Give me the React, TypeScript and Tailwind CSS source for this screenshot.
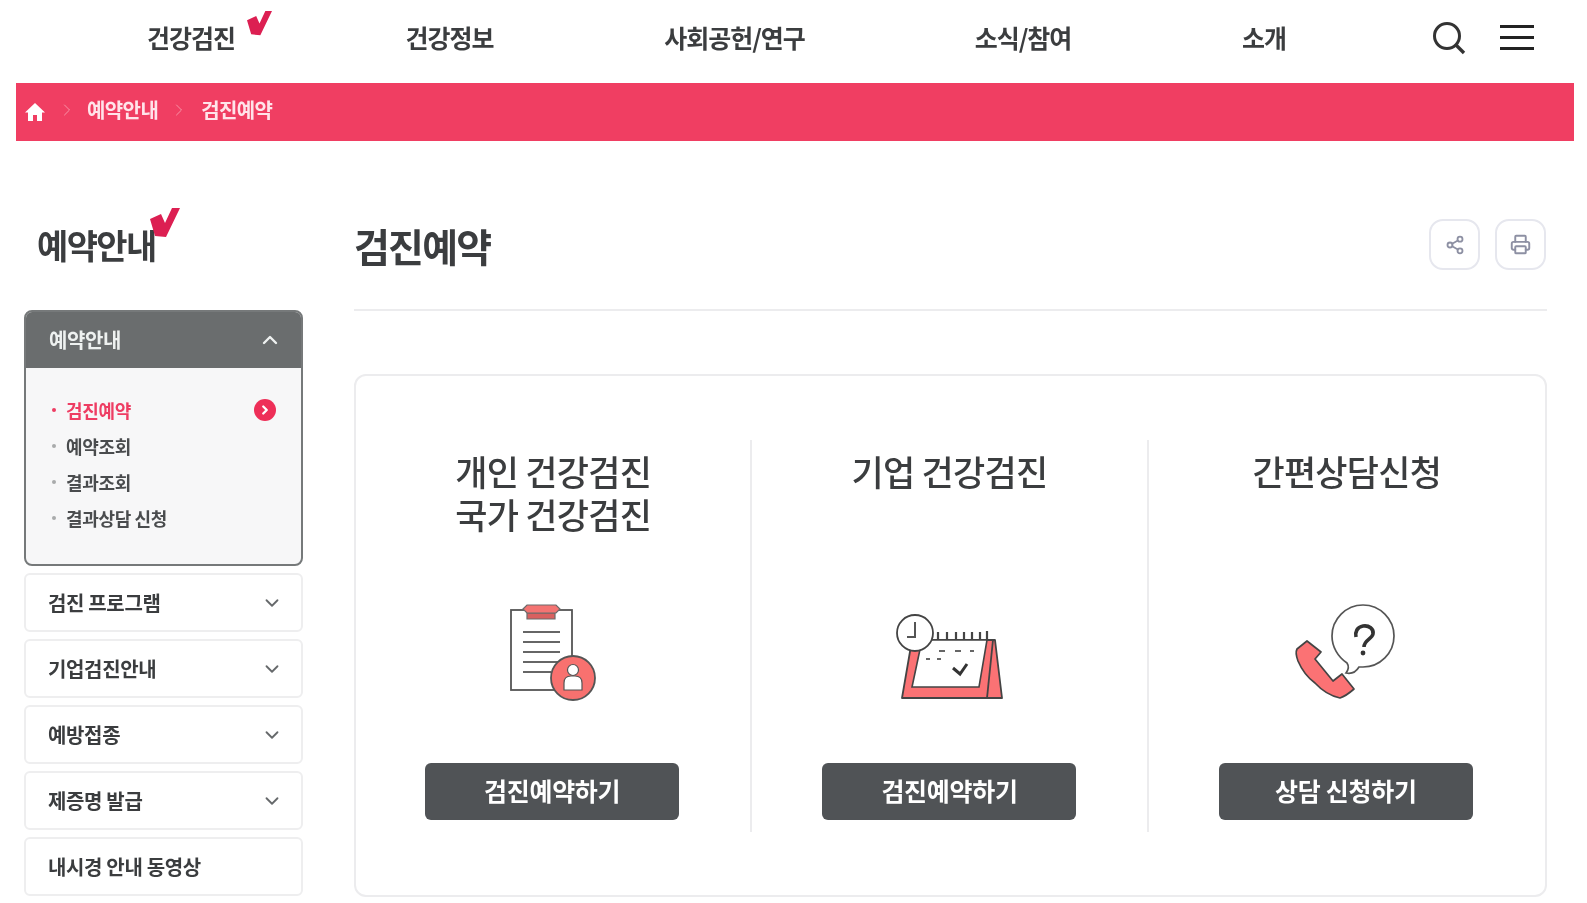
import { ChevronDown, ChevronRight, ChevronUp, Printer, Share2 } from "lucide-react";

const font = { fontFamily: '"Noto Sans CJK KR", "Noto Sans", sans-serif' };

const CheckMark = ({ className }: { className: string }) => (
  <svg viewBox="0 0 30 30" className={className}>
    <path d="M0 11 L11 6 L15 15 L22 0 L30 0 L16 29 L5 28 Z" fill="#dc1f52" />
  </svg>
);

const navItems = [
  { label: "건강검진", w: "w-[257px]", pad: "pr-[5px]" },
  { label: "건강정보", w: "w-[257px]", pad: "pr-[2px]" },
  { label: "사회공헌/연구", w: "w-[311px]", pad: "" },
  { label: "소식/참여", w: "w-[266px]", pad: "" },
  { label: "소개", w: "w-[216px]", pad: "" },
];

const subMenu = ["검진 프로그램", "기업검진안내", "예방접종", "제증명 발급", "내시경 안내 동영상"];

const ClipboardIcon = () => (
  <svg viewBox="0 0 160 140" className="w-[160px] h-[140px]">
    <rect x="30" y="30" width="61" height="80" fill="#fff" stroke="#555" strokeWidth="1.8" />
    <path d="M42 52H79M42 62H79M42 72H79M42 82H79M42 92H70" stroke="#666" strokeWidth="1.8" />
    <path d="M46 33H74V39H46Z" fill="#d9605f" stroke="#6b6b6b" strokeWidth="1.2" />
    <path d="M42 29L46 25H75L79 29L75 33H46Z" fill="#f47472" stroke="#6b6b6b" strokeWidth="1.2" />
    <circle cx="92" cy="98" r="22" fill="#f8716f" stroke="#555" strokeWidth="1.8" />
    <circle cx="92" cy="90" r="5.5" fill="#fff" stroke="#555" strokeWidth="1.2" />
    <path d="M83 110V103Q83 96 90 96H94Q101 96 101 103V110Z" fill="#fff" stroke="#555" strokeWidth="1.2" />
  </svg>
);

const CalendarIcon = () => (
  <svg viewBox="0 0 160 130" className="w-[160px] h-[130px]">
    <path d="M32 50H115L122 108H22Z" fill="#fb7274" stroke="#444" strokeWidth="1.8" strokeLinejoin="round" />
    <path d="M113 50L107 108" stroke="#444" strokeWidth="1.8" />
    <path d="M42 50H107L99 97H32Z" fill="#fff" stroke="#444" strokeWidth="1.6" />
    <path d="M58 42V50M67 42V50M76 42V50M84 42V50M92 42V50M100 42V50M107 41V50" stroke="#444" strokeWidth="2.2" />
    <path d="M59 61H65M75 61H81M90 61H94M46 69H50M57 69H61" stroke="#666" strokeWidth="2.2" />
    <path d="M73 78L80 84L87 74" fill="none" stroke="#333" strokeWidth="3" />
    <circle cx="35" cy="43" r="18" fill="#fff" stroke="#444" strokeWidth="1.8" />
    <path d="M35 32V47H27" fill="none" stroke="#555" strokeWidth="2" />
  </svg>
);

const PhoneIcon = () => (
  <svg viewBox="0 0 160 130" className="w-[160px] h-[130px]">
    <path
      d="M93 14C76 14 62 28 62 45C62 56 68 66 77 72C79 75 79 78 76 82C81 83 86 81 89 76C91 76 92 76 93 76C110 76 124 62 124 45C124 28 110 14 93 14Z"
      fill="#fff"
      stroke="#555"
      strokeWidth="1.7"
    />
    <path
      d="M86 46C85 41 87 36 93 35C99 34 104 38 103 43C102 48 94 49 94 56"
      fill="none"
      stroke="#333"
      strokeWidth="3.6"
    />
    <circle cx="93" cy="62" r="2.4" fill="#333" />
    <path
      d="M37 50L27 58Q25 62 28 70Q34 84 45 92Q56 104 70 107Q76 105 84 98L72 83L63 90L45 68L51 61Z"
      fill="#fb7274"
      stroke="#444"
      strokeWidth="1.7"
      strokeLinejoin="round"
    />
  </svg>
);

const columns = [
  { title: ["개인 건강검진", "국가 건강검진"], icon: <ClipboardIcon />, cta: "검진예약하기", border: true, iconBox: "ml-[16px]", btn: "mr-[2px]" },
  { title: ["기업 건강검진"], icon: <CalendarIcon />, cta: "검진예약하기", border: true, iconBox: "ml-[22px] pt-[10px]", btn: "" },
  { title: ["간편상담신청"], icon: <PhoneIcon />, cta: "상담 신청하기", border: false, iconBox: "ml-[6px] pt-[11px]", btn: "mr-[2px]" },
];

export default function App() {
  return (
    <div style={font} className="w-[1587px] h-[903px] overflow-hidden bg-white text-[#3b3d3f] [filter:blur(0.6px)]">
      {/* Top nav */}
      <header className="h-[83px] flex items-center pl-[65px]">
        {navItems.map((item, i) => (
          <div key={item.label} className={`${item.w} ${item.pad} flex justify-center relative`}>
            <span className="text-[25px] font-bold tracking-[-1px] pb-[7px]">{item.label}</span>
            {i === 0 && <CheckMark className="absolute left-[182px] top-[-8px] w-[25px] h-[25px]" />}
          </div>
        ))}
        <div className="ml-[60px] flex items-center gap-[33px] pb-[8px]">
          <svg viewBox="0 0 34 34" className="w-[34px] h-[34px]" fill="none" stroke="#333" strokeWidth="3">
            <circle cx="15" cy="15" r="12.5" />
            <path d="M24 24L32 32" strokeWidth="3.4" />
          </svg>
          <div className="w-[34px] ml-px flex flex-col gap-[8px]">
            <div className="h-[3px] bg-[#222]" />
            <div className="h-[3px] bg-[#222]" />
            <div className="h-[3px] bg-[#222]" />
          </div>
        </div>
      </header>

      {/* Breadcrumb */}
      <div className="ml-4 w-[1558px] h-[58px] bg-[#f03e62] flex items-center pl-[9px] pb-[4px] text-white text-[20px] font-bold tracking-[-0.6px]">
        <svg viewBox="0 0 20 20" className="w-[20px] h-[20px] mt-[4px]" fill="#fff">
          <path d="M10 1L20 10.5H17V19H12V13H8V19H3V10.5H0Z" />
        </svg>
        <ChevronRight size={20} strokeWidth={1} className="ml-[12px] text-[#f9a3b5]" />
        <span className="ml-[10px] text-[#ffe4ea]">예약안내</span>
        <ChevronRight size={20} strokeWidth={1} className="ml-[11px] text-[#f9a3b5]" />
        <span className="ml-[12px] text-[#ffe4ea]">검진예약</span>
      </div>

      <div className="flex items-start pl-6 pt-[66px]">
        {/* Sidebar */}
        <aside className="w-[279px] shrink-0">
          <div className="relative h-[103px] pl-[13px] pt-[14px]">
            <span className="text-[34px] font-bold tracking-[-1.6px] leading-[48px]">예약안내</span>
            <CheckMark className="absolute left-[126px] top-[1px] w-[30px] h-[30px]" />
          </div>
          <div className="rounded-lg border-2 border-[#76797a] bg-[#f7f7f8] overflow-hidden h-[256px]">
            <div className="h-[56px] bg-[#6a6d6e] flex items-center justify-between pl-[23px] pr-[19px] text-[#eef1f0]">
              <span className="text-[20px] font-bold tracking-[-0.4px]">예약안내</span>
              <ChevronUp size={24} strokeWidth={2.4} />
            </div>
            <ul className="pt-[24px] pl-[26px] pr-[25px] text-[18px] tracking-[-0.35px] font-bold">
              <li className="h-[36px] flex items-center text-[#ee3d63]">
                <span className="w-[4px] h-[4px] rounded-full bg-[#ee3d63] mr-[10px]" />
                검진예약
                <span className="ml-auto w-[22px] h-[22px] rounded-full bg-[#ee2f58] flex items-center justify-center">
                  <ChevronRight size={14} strokeWidth={4} className="text-white" />
                </span>
              </li>
              {["예약조회", "결과조회", "결과상담 신청"].map((label) => (
                <li key={label} className="h-[36px] flex items-center text-[#4a4c4e]">
                  <span className="w-[4px] h-[4px] rounded-full bg-[#a9abac] mr-[10px]" />
                  {label}
                </li>
              ))}
            </ul>
          </div>
          <div className="mt-[7px] flex flex-col gap-[7px]">
            {subMenu.map((label, i) => (
              <div
                key={label}
                className="h-[59px] rounded-md border-2 border-[#eeeeef] flex items-center justify-between pl-[22px] pr-[18px] text-[20px] font-bold tracking-[-0.35px]"
              >
                {label}
                {i < 4 && <ChevronDown size={22} strokeWidth={2} className="text-[#66696b]" />}
              </div>
            ))}
          </div>
        </aside>

        {/* Main */}
        <main className="ml-[51px] w-[1193px]">
          <div className="h-[104px] border-b-2 border-[#ececee] flex justify-between">
            <h1 className="pt-[10px] text-[39px] font-bold tracking-[-1.8px] leading-[56px]">검진예약</h1>
            <div className="flex gap-[15px] pr-px pt-[12px]">
              <button className="w-[51px] h-[51px] rounded-[14px] border-2 border-[#e6e7ee] flex items-center justify-center text-[#8d90a3]">
                <Share2 size={20} strokeWidth={2.2} />
              </button>
              <button className="w-[51px] h-[51px] rounded-[14px] border-2 border-[#e6e7ee] flex items-center justify-center text-[#8d90a3]">
                <Printer size={21} strokeWidth={2.2} />
              </button>
            </div>
          </div>
          <div className="mt-[63px] h-[523px] rounded-xl border-2 border-[#ececee] pt-[64px] pb-[63px] grid grid-cols-3">
            {columns.map((col) => (
              <section
                key={col.cta + col.title[0]}
                className={`flex flex-col items-center ${col.border ? "border-r-2 border-[#ececee]" : ""}`}
              >
                <h2 className="h-[140px] text-center text-[35px] font-medium tracking-[-0.75px] leading-[43px] pt-[9px]">
                  {col.title.map((line) => (
                    <div key={line}>{line}</div>
                  ))}
                </h2>
                <div className={`h-[183px] ${col.iconBox}`}>{col.icon}</div>
                <button className={`w-[254px] h-[57px] ${col.btn} pb-[2px] rounded-md bg-[#505356] text-white text-[25px] font-bold tracking-[-0.3px]`}>
                  {col.cta}
                </button>
              </section>
            ))}
          </div>
        </main>
      </div>
    </div>
  );
}
